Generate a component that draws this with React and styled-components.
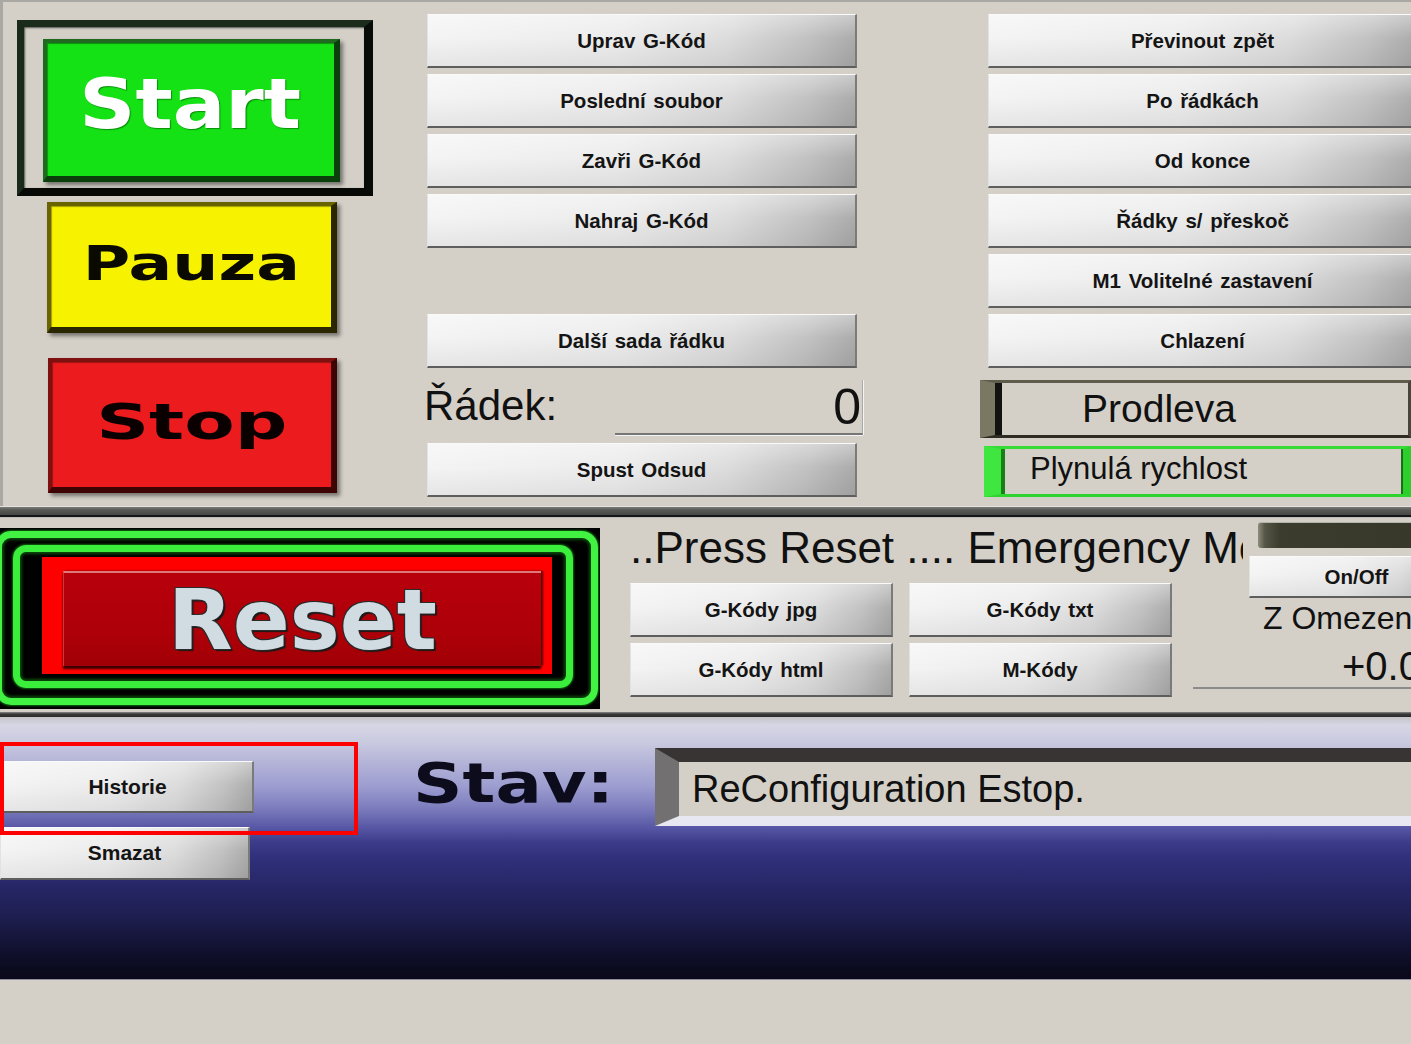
import React from "react";
import styled, { createGlobalStyle } from "styled-components";

const Global = createGlobalStyle`
  html, body { margin: 0; padding: 0; background: #d4d0c8; }
  body { font-family: "Liberation Sans", Arial, sans-serif; color: #111; }
  * { box-sizing: border-box; }
`;

const Screen = styled.div`
  width: 1411px;
  height: 1044px;
  overflow: hidden;
  background: #d4d0c8;
  display: flex;
  flex-direction: column;
`;

/* ---------- generic grey button ---------- */
const Btn = styled.button`
  flex-shrink: 0;
  width: ${(p) => p.$w || 430}px;
  height: ${(p) => p.$h || 54}px;
  margin: 0;
  padding: 0;
  font-family: "Liberation Sans", Arial, sans-serif;
  font-weight: bold;
  font-size: ${(p) => p.$fs || 20.5}px;
  color: #141414;
  text-align: center;
  white-space: nowrap;
  word-spacing: 2px;
  border-style: solid;
  border-width: 1px 2px 2px 1px;
  border-color: #fafafa #7a7a7a #5e5e5e #e2e2e2;
  background:
    linear-gradient(to bottom, rgba(255, 255, 255, 0.35), rgba(255, 255, 255, 0) 45%, rgba(0, 0, 0, 0.06)),
    linear-gradient(100deg, #f4f4f4 0%, #ececec 45%, #dcdcdc 70%, #c2c2c2 88%, #a9a9a9 100%);
`;

/* ---------- top panel ---------- */
const TopPanel = styled.section`
  display: flex;
  height: 506px;
  flex-shrink: 0;
  box-shadow: inset 3px 2px 0 #aaa8a2;
`;

const LeftCol = styled.div`
  width: 427px;
  flex-shrink: 0;
  display: flex;
  flex-direction: column;
  align-items: flex-start;
  padding-top: 20px;
`;

const StartFrame = styled.div`
  margin-left: 17px;
  width: 356px;
  height: 176px;
  border-style: solid;
  border-width: 7px 9px 8px 7px;
  border-color: #1c2c1c #080c08 #060906 #1a2a1a;
  padding: 12px 0 0 19px;
  box-shadow: inset 1px 1px 2px rgba(0, 0, 0, 0.6);
`;

const BigButton = styled.div`
  width: ${(p) => p.$w}px;
  height: ${(p) => p.$h}px;
  margin: ${(p) => p.$m || "0"};
  background: ${(p) => p.$bg};
  border-style: solid;
  border-width: 4px 6px 6px 4px;
  border-color: ${(p) => p.$light} ${(p) => p.$dark} ${(p) => p.$dark} ${(p) => p.$light};
  box-shadow: 3px 3px 4px rgba(0, 0, 0, 0.45), inset 1px 1px 1px rgba(0, 0, 0, 0.35);
  display: flex;
  align-items: center;
  justify-content: center;
  padding-bottom: ${(p) => p.$pb || 0}px;
`;

const BigLabel = styled.span`
  font-family: "DejaVu Sans", Verdana, sans-serif;
  font-weight: bold;
  font-size: ${(p) => p.$fs}px;
  line-height: 1;
  color: ${(p) => p.$color};
  transform: scaleX(${(p) => p.$sx});
  text-shadow: ${(p) => p.$shadow || "none"};
  white-space: nowrap;
`;

const MidCol = styled.div`
  width: 430px;
  flex-shrink: 0;
  display: flex;
  flex-direction: column;
  gap: 6px;
  padding-top: 14px;
`;

const Spacer = styled.div`
  height: ${(p) => p.$h}px;
  width: ${(p) => p.$w || 0}px;
  flex-shrink: 0;
`;

const LineRow = styled.div`
  display: flex;
  height: 63px;
  margin: 0 -6px 0 -3px;
`;

const LineLabel = styled.span`
  font-size: 42px;
  line-height: 63px;
  color: #111;
`;

const LineField = styled.div`
  margin: 6px 0 0 auto;
  width: 248px;
  height: 55px;
  border-bottom: 2px solid #767676;
  border-right: 1px solid #a8a8a8;
  box-shadow: 1px 0 0 #f4f4f4, 0 1px 0 #f4f4f4;
  display: flex;
  align-items: center;
  justify-content: flex-end;
  font-size: 50px;
  line-height: 1;
  padding-right: 1px;
  color: #111;
`;

const RightCol = styled.div`
  width: 430px;
  flex-shrink: 0;
  display: flex;
  flex-direction: column;
  gap: 6px;
  padding-top: 14px;
`;

const Prodleva = styled.div`
  margin: 6px 0 0 -8px;
  width: 431px;
  height: 58px;
  flex-shrink: 0;
  border-style: solid;
  border-width: 3px 3px 3px 15px;
  border-color: #5e5c4c #48463a #2e2c22 #7a7862;
  box-shadow: inset 7px 0 0 #121210;
  display: flex;
  align-items: center;
  padding-left: 87px;
  font-size: 39px;
  color: #111;
`;

const Plynula = styled.div`
  margin: 2px 0 0 -4px;
  width: 427px;
  height: 51px;
  flex-shrink: 0;
  border-style: solid;
  border-width: 3px 8px 3px 17px;
  border-color: #36dc36 #2cce2c #2ed42e #40e640;
  box-shadow: inset 4px 0 0 #178017, inset -2px 0 0 #1b6d1b;
  display: flex;
  align-items: center;
  padding: 0 0 6px 29px;
  font-size: 31px;
  color: #111;
`;

/* ---------- separators ---------- */
const TopSep = styled.div`
  height: 12px;
  flex-shrink: 0;
  background: linear-gradient(
    to bottom,
    #e4e2de 0px,
    #e4e2de 1px,
    #7c7c7a 1px,
    #575955 4px,
    #474745 9px,
    #161616 9px,
    #161616 11px,
    #bdbdbd 11px
  );
`;

const MidSep = styled.div`
  height: 5px;
  flex-shrink: 0;
  background: linear-gradient(to bottom, #8a8a88, #3a3a3a 40%, #2a2a2a);
`;

/* ---------- middle panel ---------- */
const MidPanel = styled.section`
  display: flex;
  height: 194px;
  flex-shrink: 0;
`;

const ResetFrame = styled.div`
  width: 600px;
  height: 181px;
  margin-top: 10px;
  flex-shrink: 0;
  background: #000;
  padding: 3px 2px 4px 0;
  display: flex;
  overflow: hidden;
`;

const OuterRing = styled.div`
  flex: 1;
  display: flex;
  margin-left: -5px;
  border: 7px solid #42f242;
  border-radius: 16px;
  padding: 7px 18px 10px 11px;
  box-shadow: inset 0 0 3px 2px #0c4c0c, 0 0 2px 1px #0f6a0f;
`;

const InnerRing = styled.div`
  flex: 1;
  display: flex;
  border: 7px solid #3cee3c;
  border-radius: 13px;
  padding: 5px 14px 7px 22px;
  box-shadow: inset 0 0 3px 2px #0c4c0c, 0 0 2px 1px #0f6a0f;
`;

const RedBox = styled.div`
  flex: 1;
  display: flex;
  background: #ff0000;
  padding: 14px 11px 8px 21px;
`;

const ResetButton = styled.div`
  flex: 1;
  display: flex;
  align-items: center;
  justify-content: center;
  background: linear-gradient(to bottom, #b8000c, #ac0008 70%, #a00006);
  border-top: 2px solid #e07a7a;
  border-left: 1px solid #c43a3a;
  box-shadow: 0 3px 2px #3a0000, 2px 0 2px #5a0000;
`;

const ResetText = styled.span`
  font-family: "DejaVu Sans", Verdana, sans-serif;
  font-weight: bold;
  font-size: 84px;
  line-height: 1;
  color: #d0dce2;
  text-shadow: -1px -1px 0 #2a2a2a, 1px -1px 0 #2a2a2a, -1px 1px 0 #2a2a2a, 2px 2px 1px #1a1a1a;
`;

const MsgCol = styled.div`
  width: 563px;
  margin-left: 30px;
  flex-shrink: 0;
  display: flex;
  flex-direction: column;
`;

const MsgText = styled.div`
  width: 613px;
  height: 52px;
  margin-top: 4px;
  flex-shrink: 0;
  font-size: 44px;
  line-height: 52px;
  white-space: nowrap;
  overflow: hidden;
  color: #111;
`;

const CodeGrid = styled.div`
  margin-top: 9px;
  display: grid;
  grid-template-columns: 263px 263px;
  grid-auto-rows: 54px;
  column-gap: 16px;
  row-gap: 6px;
`;

const ZCol = styled.div`
  width: 218px;
  flex-shrink: 0;
  display: flex;
  flex-direction: column;
  align-items: flex-start;
  overflow: hidden;
`;

const DarkBar = styled.div`
  margin: 4px 0 0 65px;
  width: 160px;
  height: 26px;
  flex-shrink: 0;
  border-top: 1px solid #b4b4ac;
  border-radius: 3px 0 0 3px;
  background: linear-gradient(to right, #8c8c7c 0px, #555545 7px, #3c3c2e 22px, #38382a 100%);
`;

const ZLabel = styled.div`
  font-size: 32px;
  line-height: 40px;
  padding-left: 70px;
  white-space: nowrap;
  color: #111;
`;

const ZValue = styled.div`
  width: 218px;
  font-size: 40px;
  line-height: 1;
  padding: 8px 0 1px 149px;
  white-space: nowrap;
  border-bottom: 2px solid #8c8c8c;
  color: #111;
`;

/* ---------- bottom panel ---------- */
const BottomPanel = styled.section`
  position: relative;
  display: flex;
  height: 263px;
  flex-shrink: 0;
  border-bottom: 1px solid #8e8ca0;
  background: linear-gradient(
    to bottom,
    #c4c4c8 0px,
    #d6d6e4 8px,
    #cacae0 25px,
    #b4b4d8 45px,
    #9c9cd0 70px,
    #7e7ebe 90px,
    #5858a6 110px,
    #3c3c8a 125px,
    #30307c 140px,
    #262666 170px,
    #1e1e50 200px,
    #121232 230px,
    #0a0a1c 255px,
    #08081a 263px
  );
`;

const HistCol = styled.div`
  width: 413px;
  flex-shrink: 0;
  display: flex;
  flex-direction: column;
  align-items: flex-start;
  padding-top: 44px;
`;

const StavLabel = styled.div`
  width: 242px;
  flex-shrink: 0;
  margin-top: 39px;
  font-family: "DejaVu Sans", Verdana, sans-serif;
  font-weight: bold;
  font-size: 55px;
  line-height: 55px;
  height: 55px;
  color: #0c0c1c;
  transform: scaleX(1.25);
  transform-origin: left center;
`;

const StatusField = styled.div`
  margin-top: 31px;
  height: 78px;
  flex: 1;
  border-style: solid;
  border-width: 14px 0 10px 24px;
  border-color: #383434 transparent #e8e8f2 #727070;
  background: #d4d0c8;
  display: flex;
  align-items: center;
  padding-left: 13px;
  font-size: 38px;
  white-space: nowrap;
  color: #111;
`;

const Highlight = styled.div`
  position: absolute;
  left: 0;
  top: 25px;
  width: 358px;
  height: 93px;
  border: 4px solid #ff0000;
  pointer-events: none;
`;

const midButtons = ["Uprav G-Kód", "Poslední  soubor", "Zavři G-Kód", "Nahraj G-Kód"];
const rightButtons = [
  "Převinout zpět",
  "Po řádkách",
  "Od konce",
  "Řádky s/ přeskoč",
  "M1 Volitelné zastavení",
  "Chlazení",
];
const codeButtons = ["G-Kódy jpg", "G-Kódy txt", "G-Kódy html", "M-Kódy"];

export default function App() {
  return (
    <>
      <Global />
      <Screen>
        <TopPanel>
          <LeftCol>
            <StartFrame>
              <BigButton $w={297} $h={143} $bg="#14e214" $dark="#0a3e0a" $light="#1f6a1f" $pb={10}>
                <BigLabel $fs={69} $sx={1.13} $color="#ffffff" $shadow="1px 1px 1px rgba(0,70,0,0.55)">
                  Start
                </BigLabel>
              </BigButton>
            </StartFrame>
            <BigButton $w={290} $h={131} $m="6px 0 0 47px" $bg="#f6f200" $dark="#2a2700" $light="#6a6400" $pb={8}>
              <BigLabel $fs={48} $sx={1.35} $color="#0a0a00">
                Pauza
              </BigLabel>
            </BigButton>
            <BigButton $w={289} $h={135} $m="25px 0 0 48px" $bg="#ec1c1e" $dark="#3e0404" $light="#7e1010" $pb={4}>
              <BigLabel $fs={49} $sx={1.5} $color="#0a0000">
                Stop
              </BigLabel>
            </BigButton>
          </LeftCol>

          <MidCol>
            {midButtons.map((t) => (
              <Btn key={t}>{t}</Btn>
            ))}
            <Spacer $h={54} />
            <Btn>Další  sada řádku</Btn>
            <LineRow>
              <LineLabel>Řádek:</LineLabel>
              <LineField>0</LineField>
            </LineRow>
            <Btn>Spust Odsud</Btn>
          </MidCol>

          <Spacer $h={0} $w={131} />

          <RightCol>
            {rightButtons.map((t) => (
              <Btn key={t}>{t}</Btn>
            ))}
            <Prodleva>Prodleva</Prodleva>
            <Plynula>Plynulá rychlost</Plynula>
          </RightCol>
        </TopPanel>

        <TopSep />

        <MidPanel>
          <ResetFrame>
            <OuterRing>
              <InnerRing>
                <RedBox>
                  <ResetButton>
                    <ResetText>Reset</ResetText>
                  </ResetButton>
                </RedBox>
              </InnerRing>
            </OuterRing>
          </ResetFrame>

          <MsgCol>
            <MsgText>..Press Reset .... Emergency Mode ....</MsgText>
            <CodeGrid>
              {codeButtons.map((t) => (
                <Btn key={t} $w={263} $h={54}>
                  {t}
                </Btn>
              ))}
            </CodeGrid>
          </MsgCol>

          <ZCol>
            <DarkBar />
            <Btn $w={216} $h={42} style={{ marginTop: 8, marginLeft: 56 }}>
              On/Off
            </Btn>
            <ZLabel>Z Omezeni</ZLabel>
            <ZValue>+0.0000</ZValue>
          </ZCol>
        </MidPanel>

        <MidSep />

        <BottomPanel>
          <HistCol>
            <Btn $w={252} $h={52} $fs={21} style={{ marginLeft: 2 }}>
              Historie
            </Btn>
            <Btn $w={250} $h={53} $fs={21} style={{ marginTop: 14 }}>
              Smazat
            </Btn>
          </HistCol>
          <StavLabel>Stav:</StavLabel>
          <StatusField>ReConfiguration Estop.</StatusField>
          <Highlight />
        </BottomPanel>
      </Screen>
    </>
  );
}
